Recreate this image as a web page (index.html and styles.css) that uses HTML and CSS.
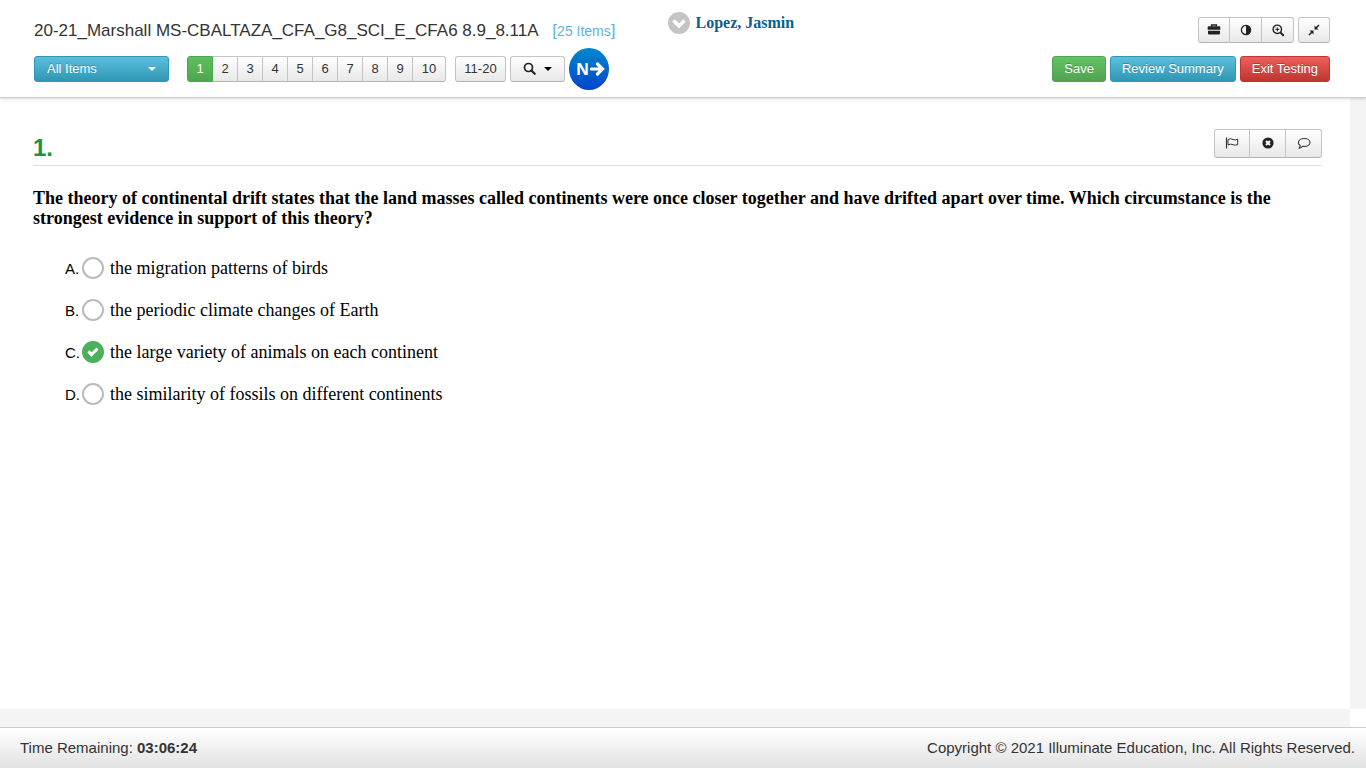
FILE: index.html
```html
<!DOCTYPE html>
<html lang="en">
<head>
  <meta charset="UTF-8" />
  <meta name="viewport" content="width=device-width, initial-scale=1.0"/>
  <title>Online Testing</title>
  <link rel="stylesheet" href="styles.css">
</head>
<body>
  <header class="header">
    <div class="header-row">
      <h1 class="title">20-21_Marshall MS-CBALTAZA_CFA_G8_SCI_E_CFA6 8.9_8.11A <span class="count">[<small>25 Items</small>]</span></h1>
      <div class="user">
        <svg width="22" height="22" viewBox="0 0 22 22"><circle cx="11" cy="11" r="11" fill="#c4c4c4"/><path d="M5.5 8.5l5.5 5.5 5.5-5.5" fill="none" stroke="#fff" stroke-width="3.4"/></svg>
        <span>Lopez, Jasmin</span>
      </div>
      <div class="right tools">
        <div class="group">
          <button class="btn tool-btn first" aria-label="Tools"><svg width="14" height="14" viewBox="0 0 14 14"><path d="M4.5 3.5V2h5v1.5" fill="none" stroke="#222" stroke-width="1.3"/><path d="M1.5 3.3h11q.8 0 .8.8v2.7H.7V4.1q0-.8.8-.8zM1 7.8h12v2.8q0 .8-.8.8H1.8q-.8 0-.8-.8z" fill="#222"/></svg></button>
          <button class="btn tool-btn" aria-label="Contrast"><svg width="14" height="14" viewBox="0 0 14 14"><circle cx="7" cy="7" r="4.6" fill="none" stroke="#222" stroke-width="1.3"/><path d="M7 2.2a4.8 4.8 0 0 1 0 9.6z" fill="#222"/></svg></button>
          <button class="btn tool-btn" aria-label="Zoom in"><svg width="14" height="14" viewBox="0 0 14 14"><circle cx="6.3" cy="6.3" r="4.2" fill="none" stroke="#222" stroke-width="1.4"/><path d="M9.6 9.6l2.6 2.6" stroke="#222" stroke-width="2" stroke-linecap="round"/><path d="M4.3 6.3h4M6.3 4.3v4" stroke="#222" stroke-width="1"/></svg></button>
        </div>
        <button class="btn tool-btn" aria-label="Exit full screen"><svg width="14" height="14" viewBox="0 0 14 14"><path d="M7.5 2.5v4h4zM6.500 11.500v-4h-4z" fill="#222"/><path d="M8.500 5.500l3.500-3.500M5.500 8.500L2 12" stroke="#222" stroke-width="1.500"/></svg></button>
      </div>
    </div>
    <div class="header-row nav-row">
      <div class="filter">
        <select class="filter-select" aria-label="Filter items">
          <option>All Items</option>
          <option>Flagged</option>
        </select>
        <svg class="caret" width="8" height="4" viewBox="0 0 8 4"><path d="M0 0h8L4 4z" fill="#fff"/></svg>
      </div>
      <div class="group">
        <button class="btn page-btn first">1</button>
        <button class="btn page-btn">2</button>
        <button class="btn page-btn">3</button>
        <button class="btn page-btn">4</button>
        <button class="btn page-btn">5</button>
        <button class="btn page-btn">6</button>
        <button class="btn page-btn">7</button>
        <button class="btn page-btn">8</button>
        <button class="btn page-btn">9</button>
        <button class="btn page-btn last">10</button>
      </div>
      <button class="btn range-btn">11-20</button>
      <button class="btn search-btn" aria-label="Search items">
        <svg width="13" height="13" viewBox="0 0 13 13"><circle cx="5.500" cy="5.500" r="4" fill="none" stroke="#222" stroke-width="1.700"/><path d="M8.500 8.500l3.200 3.200" stroke="#222" stroke-width="2.200" stroke-linecap="round"/></svg>
        <svg width="8" height="4" viewBox="0 0 8 4"><path d="M0 0h8L4 4z" fill="#000"/></svg>
      </button>
      <button class="next-btn" aria-label="Next item">N<svg width="15" height="14" viewBox="0 0 15 14"><path d="M1.500 7h11M7.500 2l5 5-5 5" fill="none" stroke="#fff" stroke-width="3.200" stroke-linecap="round"/></svg></button>
      <div class="right actions">
        <button class="btn save-btn">Save</button>
        <button class="btn review-btn">Review Summary</button>
        <button class="btn exit-btn">Exit Testing</button>
      </div>
    </div>
  </header>

  <main class="main">
    <section class="content">
      <div class="question-head">
        <h2 class="number">1.</h2>
        <div class="group">
          <button class="btn mark-btn" aria-label="Flag"><svg width="14" height="14" viewBox="0 0 14 14"><path d="M1.500 1.500v11" stroke="#333" stroke-width="1.200"/><path d="M3 3.500q2.500-1.500 5 0 2 1 4.700-.3v5.300q-2.700 1.300-4.700.2-2.500-1.300-5 .3z" fill="none" stroke="#333" stroke-width="1"/></svg></button>
          <button class="btn mark-btn" aria-label="Clear answer"><svg width="14" height="14" viewBox="0 0 14 14"><circle cx="7" cy="7" r="5.600" fill="#222"/><path d="M5 5l4 4M9 5L5 9" stroke="#fff" stroke-width="1.900"/></svg></button>
          <button class="btn mark-btn" aria-label="Comment"><svg width="14" height="14" viewBox="0 0 14 14"><path d="M7.200 2.500c3.200 0 5.800 1.700 5.800 4s-2.600 4-5.800 4q-.8 0-1.500-.1-1.500 1.500-3.700 1.900 1.100-1.200 1.200-2.800C2 8.700 1.400 7.700 1.400 6.500c0-2.300 2.600-4 5.800-4z" fill="none" stroke="#333" stroke-width="1.100" stroke-linejoin="round"/></svg></button>
        </div>
      </div>
      <p class="question">The theory of continental drift states that the land masses called continents were once closer together and have drifted apart over time. Which circumstance is the strongest evidence in support of this theory?</p>
      <div class="options">
        <label class="option"><span class="letter">A.</span><input type="radio" name="answer" value="A"/><span>the migration patterns of birds</span></label>
        <label class="option"><span class="letter">B.</span><input type="radio" name="answer" value="B"/><span>the periodic climate changes of Earth</span></label>
        <label class="option"><span class="letter">C.</span><input type="radio" name="answer" value="C" checked/><span>the large variety of animals on each continent</span></label>
        <label class="option"><span class="letter">D.</span><input type="radio" name="answer" value="D"/><span>the similarity of fossils on different continents</span></label>
      </div>
    </section>
    <div class="track"></div>
    <div class="track"></div>
  </main>

  <footer class="footer">
    <span>Time Remaining: <strong>03:06:24</strong></span>
    <span>Copyright © 2021 Illuminate Education, Inc. All Rights Reserved.</span>
  </footer>
</body>
</html>
```

FILE: styles.css
```css
* {
  box-sizing: border-box;
}
body {
  margin: 0;
  min-height: 100vh;
  display: flex;
  flex-direction: column;
  font-family: "Liberation Sans", Arial, sans-serif;
  font-size: 15px;
  color: #333;
  background-color: #fff;
}

/* header */
.header {
  padding: 12px 36px 7px 34px;
  border-bottom: 1px solid #ccc;
  box-shadow: 0 1px 3px rgba(0, 0, 0, 0.15);
  z-index: 1;
}
.header-row {
  display: flex;
  align-items: center;
  height: 36px;
}
.nav-row {
  height: 42px;
}
.title {
  margin: 0;
  padding-top: 2px;
  font-size: 17px;
  font-weight: normal;
  line-height: 20px;
}
.count {
  margin-left: 10px;
  color: #5bb5dc;
}
.count small {
  font-size: 14px;
}
.user {
  display: flex;
  align-items: center;
  align-self: flex-start;
  gap: 6px;
  margin-left: 52px;
  font-family: "Liberation Serif", "Times New Roman", serif;
  font-weight: bold;
  font-size: 16px;
  color: #0b5f8a;
}
.right {
  display: flex;
  gap: 4px;
  margin-left: auto;
}

/* buttons */
.btn {
  display: flex;
  align-items: center;
  justify-content: center;
  height: 26px;
  padding: 0 0 1px;
  border: 1px solid #c4c4c4;
  border-bottom-color: #b3b3b3;
  border-radius: 3px;
  background: linear-gradient(#fff, #e8e8e8);
  font-family: inherit;
  font-size: 13px;
  color: #333;
  cursor: pointer;
}
.group {
  display: flex;
}
.group .btn {
  border-radius: 0;
}
.group .btn + .btn {
  border-left: none;
}
.group .btn:first-child {
  border-radius: 3px 0 0 3px;
}
.group .btn:last-child {
  border-radius: 0 3px 3px 0;
}
.tool-btn {
  width: 32px;
}
.page-btn {
  width: 25px;
}
.page-btn.last {
  width: 33px;
}
.page-btn.first {
  width: 26px;
  background: linear-gradient(#5fc05f, #4da64d);
  border-color: #4da64d;
  color: #fff;
}
.range-btn {
  width: 51px;
  margin-left: 9px;
}
.search-btn {
  width: 55px;
  gap: 8px;
  margin-left: 4px;
}
.next-btn {
  display: flex;
  align-items: center;
  justify-content: center;
  gap: 1px;
  width: 40px;
  height: 42px;
  margin-left: 4px;
  padding: 0 0 0 3px;
  border: none;
  border-radius: 50%;
  background: linear-gradient(#0088cc, #0044cc);
  font-family: "Open Sans", sans-serif;
  font-weight: bold;
  font-size: 16px;
  color: #fff;
  cursor: pointer;
}
.save-btn,
.review-btn,
.exit-btn {
  padding: 0 11px 1px;
  color: #fff;
  text-shadow: 0 -1px 0 rgba(0, 0, 0, 0.25);
}
.save-btn {
  background: linear-gradient(#62c462, #51a351);
  border-color: #51a351;
}
.review-btn {
  background: linear-gradient(#5bc0de, #2f96b4);
  border-color: #2f96b4;
}
.exit-btn {
  background: linear-gradient(#ee5f5b, #bd362f);
  border-color: #bd362f;
}

/* item filter */
.filter {
  position: relative;
  margin-right: 18px;
}
.filter-select {
  appearance: none;
  display: block;
  width: 135px;
  height: 26px;
  padding: 0 12px 1px;
  border: 1px solid #2f96b4;
  border-radius: 3px;
  background: linear-gradient(#5bc0de, #2f96b4);
  font-family: inherit;
  font-size: 13px;
  color: #fff;
  text-shadow: 0 -1px 0 rgba(0, 0, 0, 0.25);
}
.caret {
  position: absolute;
  right: 13px;
  top: 11px;
  pointer-events: none;
}

/* question area */
.main {
  flex: 1;
  display: grid;
  grid-template-columns: 1fr 16px;
  grid-template-rows: 1fr 18px;
}
.content {
  padding: 31px 28px 0 33px;
}
.track {
  background-color: #f4f4f4;
}
.question-head {
  display: flex;
  justify-content: space-between;
  padding-bottom: 3px;
  border-bottom: 1px solid #ddd;
}
.number {
  margin: 0;
  padding-top: 5px;
  font-size: 24px;
  line-height: 28px;
  color: #1f9140;
}
.mark-btn {
  width: 36px;
  height: 29px;
}
.question {
  margin: 22px 20px 0 0;
  font-family: "Liberation Serif", "Times New Roman", serif;
  font-weight: bold;
  font-size: 18px;
  line-height: 20px;
  color: #000;
}
.options {
  display: flex;
  flex-direction: column;
  align-items: flex-start;
  gap: 20px;
  margin: 29px 0 0 32px;
}
.option {
  display: flex;
  align-items: center;
  height: 22px;
  font-family: "Liberation Serif", "Times New Roman", serif;
  font-size: 18px;
  color: #000;
}
.letter {
  width: 17px;
  font-family: "Liberation Sans", Arial, sans-serif;
  font-size: 15px;
}
.option input {
  appearance: none;
  display: flex;
  align-items: center;
  justify-content: center;
  width: 22px;
  height: 22px;
  margin: 0 6px 0 0;
  border: 2px solid #bbb;
  border-radius: 50%;
}
.option input:checked {
  border-color: #4cb05a;
  background-color: #4cb05a;
}
.option input:checked::after {
  content: "";
  width: 7px;
  height: 3px;
  margin-bottom: 3px;
  border: solid #fff;
  border-width: 0 0 3px 3px;
  transform: rotate(-45deg);
}

/* footer */
.footer {
  display: flex;
  justify-content: space-between;
  align-items: center;
  height: 41px;
  padding: 0 11px 1px 20px;
  border-top: 1px solid #ccc;
  background: linear-gradient(#fff, #e2e2e2);
}
```
